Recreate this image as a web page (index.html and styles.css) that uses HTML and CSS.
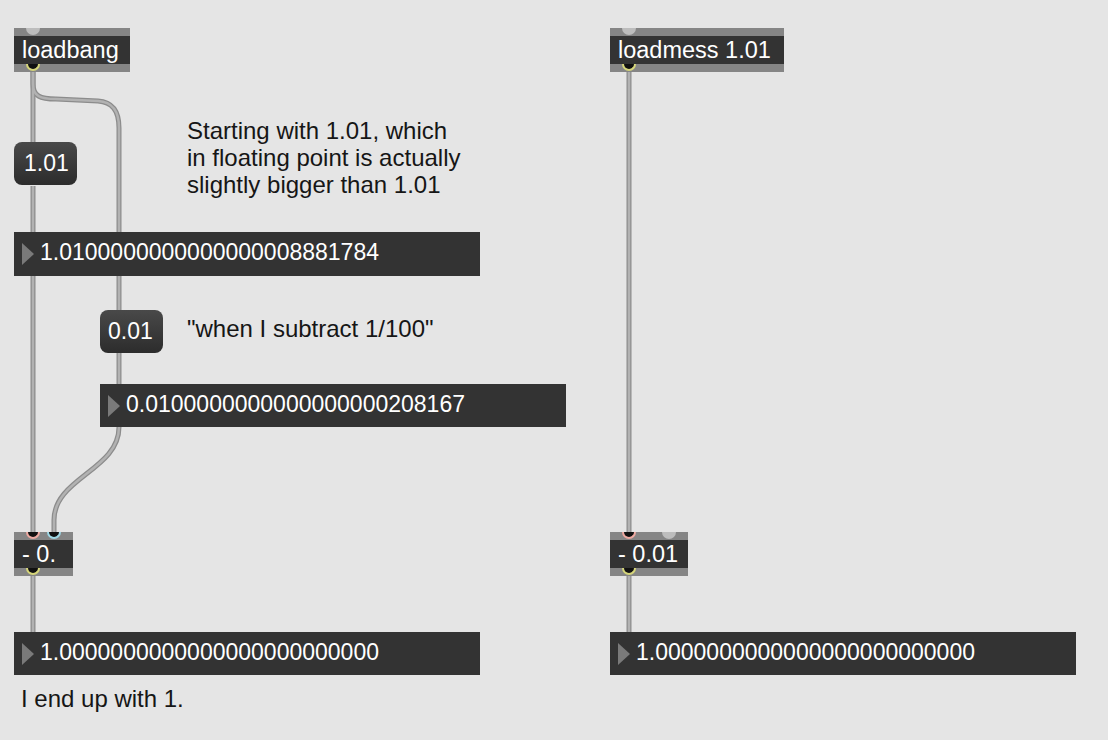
FILE: index.html
```html
<!DOCTYPE html>
<html lang="en">
<head>
    <meta charset="UTF-8">
    <title>float subtraction</title>
    <link rel="stylesheet" href="styles.css">
</head>
<body>
    <div class="patcher">
        <svg class="cords" width="1108" height="740" viewBox="0 0 1108 740">
            <g class="cord-outer">
                <path d="M33 64 V143"/>
                <path d="M33 64 V84 C33 96 40 99 56 99 L98 101 C112 102 119 110 119 128 V310"/>
                <path d="M33 186 V232"/>
                <path d="M33 276 V532"/>
                <path d="M119 353 V384"/>
                <path d="M119 427 C119 470 54 478 54 520 V532"/>
                <path d="M33 564 V632"/>
                <path d="M629 64 V532"/>
                <path d="M629 564 V632"/>
            </g>
            <g class="cord-inner">
                <path d="M33 64 V143"/>
                <path d="M33 64 V84 C33 96 40 99 56 99 L98 101 C112 102 119 110 119 128 V310"/>
                <path d="M33 186 V232"/>
                <path d="M33 276 V532"/>
                <path d="M119 353 V384"/>
                <path d="M119 427 C119 470 54 478 54 520 V532"/>
                <path d="M33 564 V632"/>
                <path d="M629 64 V532"/>
                <path d="M629 564 V632"/>
            </g>
        </svg>

        <!-- left side -->
        <div class="obj obj-loadbang">
            <div class="obj-body">loadbang</div>
            <span class="port inlet free p1"></span>
            <span class="port outlet p1"></span>
        </div>

        <div class="msg msg-101">1.01</div>

        <div class="comment comment-start">Starting with 1.01, which<br>in floating point is actually<br>slightly bigger than 1.01</div>

        <div class="flonum flonum-a"><span class="tri"></span><span class="val">1.0100000000000000008881784</span></div>

        <div class="msg msg-001">0.01</div>

        <div class="comment comment-sub">"when I subtract 1/100"</div>

        <div class="flonum flonum-b"><span class="tri"></span><span class="val">0.0100000000000000000208167</span></div>

        <div class="obj obj-minus">
            <div class="obj-body">- 0.</div>
            <span class="port inlet hot p1"></span>
            <span class="port inlet cold p2"></span>
            <span class="port outlet p1"></span>
        </div>

        <div class="flonum flonum-c"><span class="tri"></span><span class="val">1.0000000000000000000000000</span></div>

        <div class="comment comment-end">I end up with 1.</div>

        <!-- right side -->
        <div class="obj obj-loadmess">
            <div class="obj-body">loadmess 1.01</div>
            <span class="port inlet free p1"></span>
            <span class="port outlet p1"></span>
        </div>

        <div class="obj obj-minus2">
            <div class="obj-body">- 0.01</div>
            <span class="port inlet hot p1"></span>
            <span class="port inlet free p3"></span>
            <span class="port outlet p1"></span>
        </div>

        <div class="flonum flonum-d"><span class="tri"></span><span class="val">1.0000000000000000000000000</span></div>
    </div>
</body>
</html>
```

FILE: styles.css
```css
body {
    margin: 0;
    padding: 0;
    font-family: "Liberation Sans", Arial, sans-serif;
    background-color: #e5e5e5;
}
.patcher {
    position: relative;
    width: 1108px;
    height: 740px;
    overflow: hidden;
    background-color: #e5e5e5;
}
.cords {
    position: absolute;
    left: 0;
    top: 0;
}
.cords path {
    fill: none;
    stroke-linecap: butt;
}
.cord-outer path {
    stroke: #8c8c8c;
    stroke-width: 5;
}
.cord-inner path {
    stroke: #b2b2b2;
    stroke-width: 2.5;
}

/* object boxes */
.obj {
    position: absolute;
    height: 44px;
    padding: 8px 0;
    box-sizing: border-box;
    background-color: #858585;
}
.obj-body {
    height: 28px;
    line-height: 28px;
    padding-left: 8px;
    background-color: #333333;
    color: #ffffff;
    font-size: 23.5px;
    white-space: nowrap;
}
.obj-loadbang { left: 14px; top: 28px; width: 116px; }
.obj-minus { left: 14px; top: 532px; width: 59px; }
.obj-loadmess { left: 610px; top: 28px; width: 174px; }
.obj-minus2 { left: 610px; top: 532px; width: 78px; }

.port {
    position: absolute;
    width: 10px;
    height: 5px;
    border: 2px solid transparent;
    border-top: 0;
    border-radius: 0 0 8px 8px;
    background-color: #111111;
}
.inlet { top: 0; }
.outlet { top: 36px; border-color: #d6d67a; }
.inlet.free { background-color: #bdbdbd; }
.inlet.hot { border-color: #eeaaa2; }
.inlet.cold { border-color: #9fd8e6; }
.p1 { left: 12px; }
.p2 { left: 33px; }
.p3 { left: 52px; }

/* message boxes */
.msg {
    position: absolute;
    width: 63px;
    height: 43px;
    line-height: 43px;
    padding-left: 10px;
    box-sizing: border-box;
    border-radius: 8px;
    background: linear-gradient(#494949, #2c2c2c);
    color: #ffffff;
    font-size: 23px;
}
.msg-101 { left: 14px; top: 142px; }
.msg-001 { left: 100px; top: 310px; padding-left: 8px; }

/* number boxes */
.flonum {
    position: absolute;
    width: 466px;
    height: 44px;
    display: flex;
    align-items: center;
    padding-left: 8px;
    padding-bottom: 4px;
    box-sizing: border-box;
    background-color: #333333;
    color: #ffffff;
    font-size: 23px;
}
.tri {
    width: 0;
    height: 0;
    border-left: 12px solid #7a7a7a;
    border-top: 11px solid transparent;
    border-bottom: 11px solid transparent;
    margin-top: 4px;
    margin-right: 6px;
}
.val {
    line-height: 40px;
    white-space: nowrap;
}
.flonum-a { left: 14px; top: 232px; }
.flonum-b { left: 100px; top: 384px; height: 43px; }
.flonum-c { left: 14px; top: 632px; height: 43px; }
.flonum-d { left: 610px; top: 632px; height: 43px; }

/* comments */
.comment {
    position: absolute;
    font-size: 24px;
    line-height: 27px;
    color: #161616;
    white-space: nowrap;
}
.comment-start { left: 187px; top: 117px; }
.comment-sub { left: 187px; top: 315px; }
.comment-end { left: 21px; top: 685px; }
```
